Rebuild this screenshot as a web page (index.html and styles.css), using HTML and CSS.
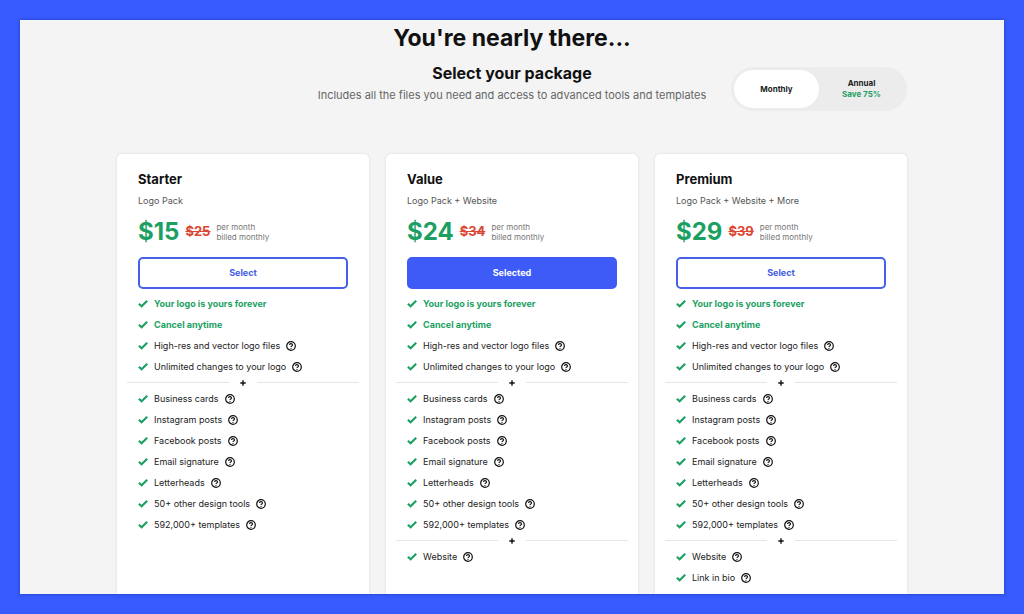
FILE: index.html
```html
<!DOCTYPE html>
<html lang="en">
<head>
<meta charset="utf-8">
<meta name="viewport" content="width=device-width, initial-scale=1">
<title>Select your package</title>
<link rel="stylesheet" href="styles.css">
</head>
<body class="page">
<svg class="sprite" aria-hidden="true">
  <symbol id="check" viewBox="0 0 10 10"><path d="M.9 4.7 3.6 7.3 9.2 1.7" fill="none" stroke="currentColor" stroke-width="2.1"/></symbol>
  <symbol id="help" viewBox="0 0 10 10"><circle cx="5" cy="5" r="4.3" fill="none" stroke="currentColor" stroke-width="1.2"/><path d="M3.5 4.1C3.5 2.2 6.5 2.2 6.5 4 6.5 5 5 5 5 6.1" fill="none" stroke="currentColor" stroke-width="1.1"/><circle cx="5" cy="7.3" r=".65" fill="currentColor"/></symbol>
  <symbol id="plus" viewBox="0 0 6 6"><path d="M3 .3V5.7M.3 3H5.7" fill="none" stroke="currentColor" stroke-width="1.4"/></symbol>
</svg>
<main class="panel">
  <div class="content">
    <h1 class="headline">You're nearly there...</h1>
    <header class="intro">
      <div class="intro-text">
        <h2 class="subhead">Select your package</h2>
        <p class="lead">Includes all the files you need and access to advanced tools and templates</p>
      </div>
      <div class="billing" role="group" aria-label="Billing period">
        <button class="period period-active" type="button" aria-pressed="true">Monthly</button>
        <button class="period" type="button" aria-pressed="false">Annual<span class="saving">Save 75%</span></button>
      </div>
    </header>
    <div class="plans">
      <section class="plan">
        <h3 class="plan-name">Starter</h3>
        <p class="plan-note">Logo Pack</p>
        <div class="price"><span class="now">$15</span><s class="was">$25</s><span class="terms">per month<br>billed monthly</span></div>
        <button class="choose" type="button">Select</button>
        <ul class="features">
          <li class="feature promise"><svg class="check"><use href="#check"/></svg>Your logo is yours forever</li>
          <li class="feature promise"><svg class="check"><use href="#check"/></svg>Cancel anytime</li>
          <li class="feature"><svg class="check"><use href="#check"/></svg>High-res and vector logo files<svg class="help"><use href="#help"/></svg></li>
          <li class="feature"><svg class="check"><use href="#check"/></svg>Unlimited changes to your logo<svg class="help"><use href="#help"/></svg></li>
        </ul>
        <div class="divider"><svg class="plus"><use href="#plus"/></svg></div>
        <ul class="features">
          <li class="feature"><svg class="check"><use href="#check"/></svg>Business cards<svg class="help"><use href="#help"/></svg></li>
          <li class="feature"><svg class="check"><use href="#check"/></svg>Instagram posts<svg class="help"><use href="#help"/></svg></li>
          <li class="feature"><svg class="check"><use href="#check"/></svg>Facebook posts<svg class="help"><use href="#help"/></svg></li>
          <li class="feature"><svg class="check"><use href="#check"/></svg>Email signature<svg class="help"><use href="#help"/></svg></li>
          <li class="feature"><svg class="check"><use href="#check"/></svg>Letterheads<svg class="help"><use href="#help"/></svg></li>
          <li class="feature"><svg class="check"><use href="#check"/></svg>50+ other design tools<svg class="help"><use href="#help"/></svg></li>
          <li class="feature"><svg class="check"><use href="#check"/></svg>592,000+ templates<svg class="help"><use href="#help"/></svg></li>
        </ul>
      </section>
      <section class="plan">
        <h3 class="plan-name">Value</h3>
        <p class="plan-note">Logo Pack + Website</p>
        <div class="price"><span class="now">$24</span><s class="was">$34</s><span class="terms">per month<br>billed monthly</span></div>
        <button class="choose choose-active" type="button">Selected</button>
        <ul class="features">
          <li class="feature promise"><svg class="check"><use href="#check"/></svg>Your logo is yours forever</li>
          <li class="feature promise"><svg class="check"><use href="#check"/></svg>Cancel anytime</li>
          <li class="feature"><svg class="check"><use href="#check"/></svg>High-res and vector logo files<svg class="help"><use href="#help"/></svg></li>
          <li class="feature"><svg class="check"><use href="#check"/></svg>Unlimited changes to your logo<svg class="help"><use href="#help"/></svg></li>
        </ul>
        <div class="divider"><svg class="plus"><use href="#plus"/></svg></div>
        <ul class="features">
          <li class="feature"><svg class="check"><use href="#check"/></svg>Business cards<svg class="help"><use href="#help"/></svg></li>
          <li class="feature"><svg class="check"><use href="#check"/></svg>Instagram posts<svg class="help"><use href="#help"/></svg></li>
          <li class="feature"><svg class="check"><use href="#check"/></svg>Facebook posts<svg class="help"><use href="#help"/></svg></li>
          <li class="feature"><svg class="check"><use href="#check"/></svg>Email signature<svg class="help"><use href="#help"/></svg></li>
          <li class="feature"><svg class="check"><use href="#check"/></svg>Letterheads<svg class="help"><use href="#help"/></svg></li>
          <li class="feature"><svg class="check"><use href="#check"/></svg>50+ other design tools<svg class="help"><use href="#help"/></svg></li>
          <li class="feature"><svg class="check"><use href="#check"/></svg>592,000+ templates<svg class="help"><use href="#help"/></svg></li>
        </ul>
        <div class="divider"><svg class="plus"><use href="#plus"/></svg></div>
        <ul class="features">
          <li class="feature"><svg class="check"><use href="#check"/></svg>Website<svg class="help"><use href="#help"/></svg></li>
        </ul>
      </section>
      <section class="plan">
        <h3 class="plan-name">Premium</h3>
        <p class="plan-note">Logo Pack + Website + More</p>
        <div class="price"><span class="now">$29</span><s class="was">$39</s><span class="terms">per month<br>billed monthly</span></div>
        <button class="choose" type="button">Select</button>
        <ul class="features">
          <li class="feature promise"><svg class="check"><use href="#check"/></svg>Your logo is yours forever</li>
          <li class="feature promise"><svg class="check"><use href="#check"/></svg>Cancel anytime</li>
          <li class="feature"><svg class="check"><use href="#check"/></svg>High-res and vector logo files<svg class="help"><use href="#help"/></svg></li>
          <li class="feature"><svg class="check"><use href="#check"/></svg>Unlimited changes to your logo<svg class="help"><use href="#help"/></svg></li>
        </ul>
        <div class="divider"><svg class="plus"><use href="#plus"/></svg></div>
        <ul class="features">
          <li class="feature"><svg class="check"><use href="#check"/></svg>Business cards<svg class="help"><use href="#help"/></svg></li>
          <li class="feature"><svg class="check"><use href="#check"/></svg>Instagram posts<svg class="help"><use href="#help"/></svg></li>
          <li class="feature"><svg class="check"><use href="#check"/></svg>Facebook posts<svg class="help"><use href="#help"/></svg></li>
          <li class="feature"><svg class="check"><use href="#check"/></svg>Email signature<svg class="help"><use href="#help"/></svg></li>
          <li class="feature"><svg class="check"><use href="#check"/></svg>Letterheads<svg class="help"><use href="#help"/></svg></li>
          <li class="feature"><svg class="check"><use href="#check"/></svg>50+ other design tools<svg class="help"><use href="#help"/></svg></li>
          <li class="feature"><svg class="check"><use href="#check"/></svg>592,000+ templates<svg class="help"><use href="#help"/></svg></li>
        </ul>
        <div class="divider"><svg class="plus"><use href="#plus"/></svg></div>
        <ul class="features">
          <li class="feature"><svg class="check"><use href="#check"/></svg>Website<svg class="help"><use href="#help"/></svg></li>
          <li class="feature"><svg class="check"><use href="#check"/></svg>Link in bio<svg class="help"><use href="#help"/></svg></li>
        </ul>
      </section>
    </div>
  </div>
</main>
</body>
</html>
```

FILE: styles.css
```css
* { box-sizing: border-box; }

.page {
  margin: 0;
  min-height: 100vh;
  padding: 20px;
  display: flex;
  background: #385bff;
  color: #111;
  font-family: Inter, "Liberation Sans", sans-serif;
}

.sprite { display: none; }

.panel {
  flex: 1;
  display: flex;
  justify-content: center;
  padding: 0 20px;
  background: #f4f4f4;
  box-shadow: 0 0 3px rgba(0, 0, 40, .4);
}

.content {
  flex: 1;
  max-width: 790px;
  display: flex;
  flex-direction: column;
}

.headline {
  margin: 2px 0 0;
  font-size: 23px;
  line-height: 32px;
  font-weight: 700;
  text-align: center;
}

.intro {
  display: grid;
  grid-template-columns: 1fr auto 1fr;
  padding-top: 8px;
}

.intro-text { grid-column: 2; text-align: center; }

.subhead {
  margin: 0;
  font-size: 16px;
  line-height: 22px;
  font-weight: 700;
}

.lead {
  margin: 3px 0 0;
  font-size: 11px;
  line-height: 16px;
  color: #666;
}

.billing {
  justify-self: end;
  display: flex;
  margin-top: 5px;
  padding: 3px;
  border-radius: 22px;
  background: #ececec;
}

.period {
  width: 85px;
  height: 38px;
  padding: 0;
  border: 0;
  border-radius: 19px;
  background: none;
  color: #222;
  font: 700 8px/11px Inter, "Liberation Sans", sans-serif;
}

.period-active { background: #fff; }

.saving { display: block; color: #1c9f63; }

.plans {
  flex: 1;
  display: grid;
  grid-template-columns: repeat(3, 1fr);
  gap: 17px;
  margin-top: 43px;
}

.plan {
  padding: 15px 21px 5px;
  border-radius: 5px 5px 0 0;
  background: #fff;
  box-shadow: 0 0 3px rgba(0, 0, 0, .1);
  clip-path: inset(-4px -4px 0 -4px);
}

.plan-name {
  margin: 0;
  font-size: 13px;
  line-height: 20px;
  font-weight: 700;
}

.plan-note {
  margin: 4px 0 0;
  font-size: 9px;
  line-height: 16px;
  color: #555;
}

.price {
  display: flex;
  align-items: center;
  gap: 6px;
  height: 32px;
  margin-top: 6px;
}

.now {
  color: #1c9f63;
  font-size: 24px;
  font-weight: 700;
}

.was {
  color: #dc4632;
  font-size: 13px;
  font-weight: 700;
}

.terms {
  padding-top: 2px;
  color: #777;
  font-size: 8px;
  line-height: 10px;
}

.choose {
  display: block;
  width: 100%;
  height: 32px;
  margin: 10px 0 4px;
  border: 2px solid #4660e8;
  border-radius: 5px;
  background: #fff;
  color: #3f5be8;
  font: 700 9px/16px Inter, "Liberation Sans", sans-serif;
}

.choose-active {
  border-color: #3e5bf8;
  background: #3e5bf8;
  color: #fff;
}

.features {
  margin: 0;
  padding: 0;
  list-style: none;
}

.feature {
  display: flex;
  align-items: center;
  height: 21px;
  font-size: 9px;
  color: #222;
}

.promise { color: #1c9f63; font-weight: 700; }

.check {
  width: 10px;
  height: 10px;
  margin-right: 6px;
  color: #1c9f63;
}

.help {
  width: 10px;
  height: 10px;
  margin-left: 6px;
  color: #111;
}

.divider {
  display: flex;
  align-items: center;
  gap: 11px;
  height: 11px;
  margin: 0 -11px;
}

.divider::before,
.divider::after {
  content: "";
  flex: 1;
  height: 1px;
  background: #e6e6e6;
}

.plus { width: 6px; height: 6px; }

@media (max-width: 760px) {
  .intro { grid-template-columns: 1fr; justify-items: center; }
  .intro-text { grid-column: 1; }
  .billing { justify-self: center; }
  .plans { grid-template-columns: 1fr; }
}
```
